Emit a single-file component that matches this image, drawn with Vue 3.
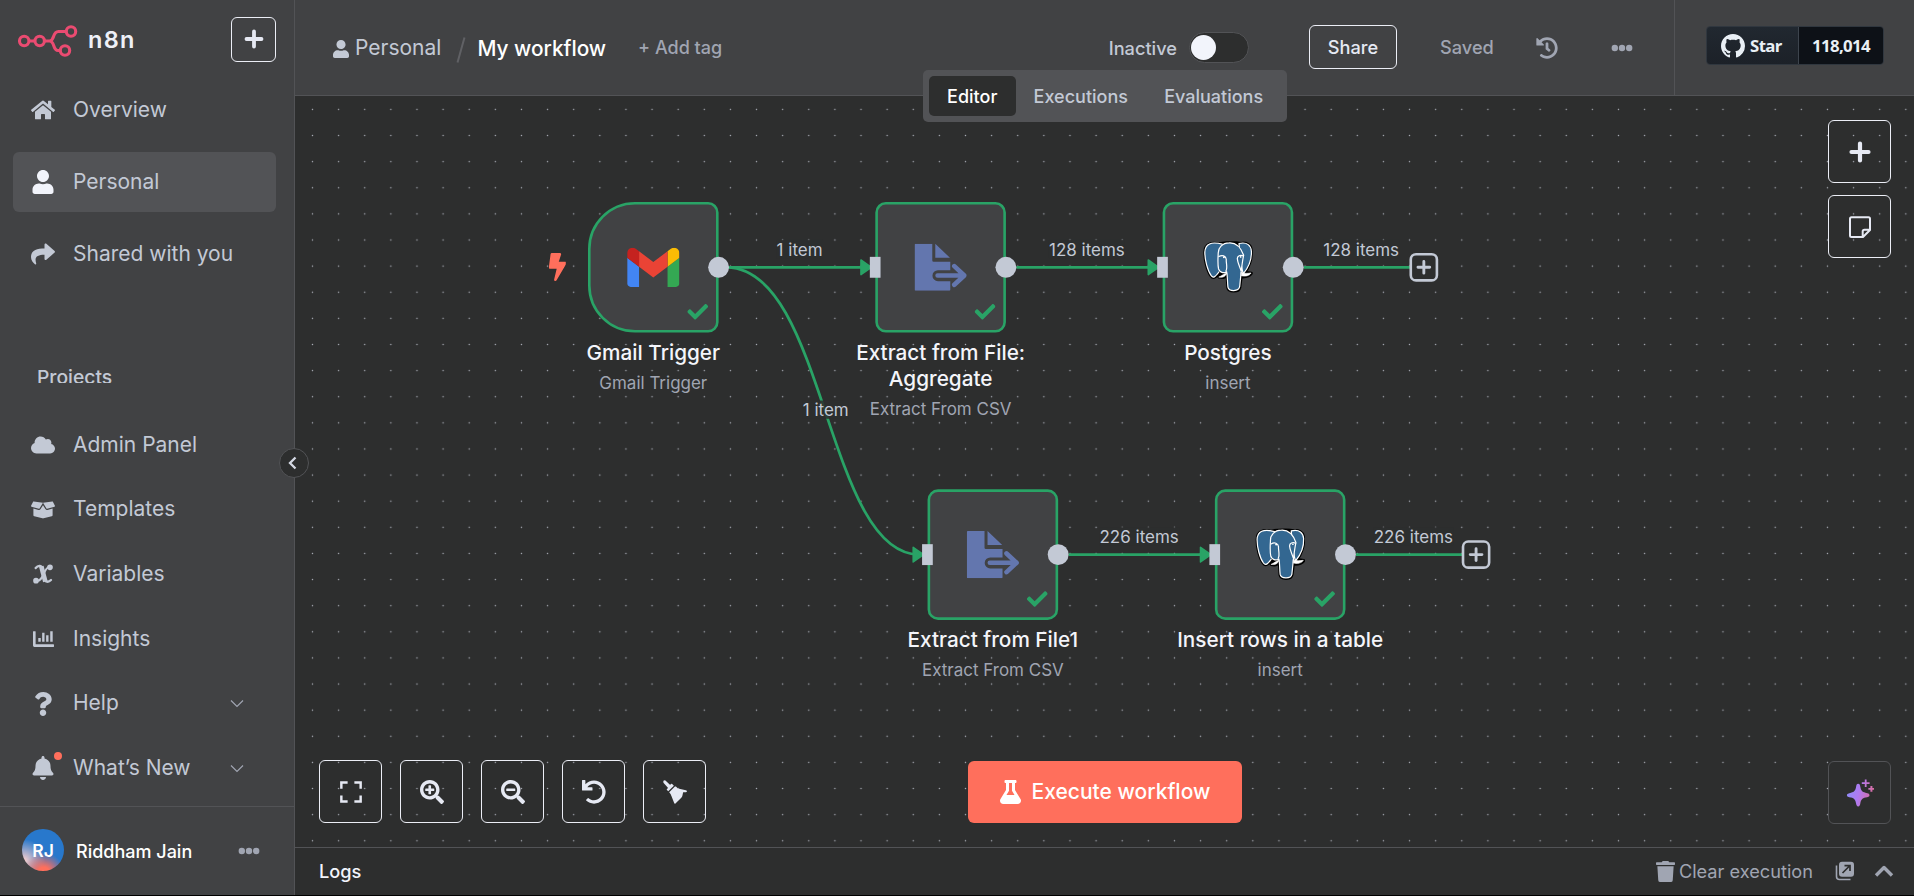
<script setup>
const icons = {
  home: { w: 576, d: 'M280.37 148.26L96 300.11V464a16 16 0 0 0 16 16l112.06-.29a16 16 0 0 0 15.92-16V368a16 16 0 0 1 16-16h64a16 16 0 0 1 16 16v95.64a16 16 0 0 0 16 16.05L464 480a16 16 0 0 0 16-16V300L295.67 148.26a12.19 12.19 0 0 0-15.3 0zM571.6 251.47L488 182.56V44.05a12 12 0 0 0-12-12h-56a12 12 0 0 0-12 12v72.61L318.47 43a48 48 0 0 0-61 0L4.34 251.47a12 12 0 0 0-1.6 16.9l25.5 31A12 12 0 0 0 45.15 301l235.22-193.74a12.19 12.19 0 0 1 15.3 0L530.9 301a12 12 0 0 0 16.9-1.6l25.5-31a12 12 0 0 0-1.7-16.93z' },
  user: { w: 448, d: 'M224 256c70.700 0 128-57.300 128-128S294.700 0 224 0 96 57.300 96 128s57.300 128 128 128zm89.600 32h-16.700c-22.200 10.200-46.900 16-72.900 16s-50.600-5.800-72.900-16h-16.700C60.200 288 0 348.200 0 422.400V464c0 26.500 21.500 48 48 48h352c26.500 0 48-21.500 48-48v-41.600c0-74.200-60.200-134.400-134.400-134.400z' },
  share: { w: 512, d: 'M503.691 189.836L327.687 37.851C312.281 24.546 288 35.347 288 56.015v80.053C127.371 137.907 0 170.1 0 322.326c0 61.441 39.581 122.309 83.333 154.132 13.653 9.931 33.111-2.533 28.077-18.631C66.066 312.814 132.917 274.316 288 272.085V360c0 20.7 24.3 31.453 39.687 18.164l176.004-152c11.071-9.562 11.086-26.753 0-36.328z' },
  cloud: { w: 640, d: 'M537.6 226.6c4.1-10.7 6.4-22.4 6.4-34.6 0-53-43-96-96-96-19.7 0-38.1 6-53.3 16.2C367 64.2 315.3 32 256 32c-88.4 0-160 71.6-160 160 0 2.7.1 5.4.2 8.1C40.2 219.8 0 273.2 0 336c0 79.5 64.5 144 144 144h368c70.7 0 128-57.3 128-128 0-61.9-44-113.6-102.4-125.4z' },
  box: { w: 640, d: 'M425.7 256c-16.9 0-32.8-9-41.4-23.4L320 126l-64.2 106.6c-8.7 14.5-24.6 23.5-41.5 23.5-4.5 0-9-.6-13.3-1.900L64 215v178c0 14.700 10 27.500 24.200 31l216.200 54.100c10.200 2.500 20.900 2.500 31 0L551.800 424c14.200-3.600 24.200-16.400 24.200-31V215l-137 39.100c-4.300 1.300-8.800 1.900-13.300 1.900zm212.600-112.200L586.800 41c-3.100-6.200-9.800-9.800-16.700-8.900L320 64l91.700 152.100c3.800 6.300 11.400 9.300 18.500 7.300l197.900-56.500c9.900-2.900 14.700-13.900 10.200-23.100zM53.200 41L1.700 143.800c-4.600 9.200.3 20.200 10.100 23l197.900 56.500c7.100 2 14.700-1 18.500-7.300L320 64 69.800 32.100c-6.900-.8-13.500 2.700-16.600 8.900z' },
  question: { w: 384, d: 'M202.021 0C122.202 0 70.503 32.703 29.914 91.026c-7.363 10.58-5.093 25.086 5.178 32.874l43.138 32.709c10.373 7.865 25.132 6.026 33.253-4.148 25.049-31.381 43.63-49.449 82.757-49.449 30.764 0 68.816 19.799 68.816 49.631 0 22.552-18.617 34.134-48.993 51.164-35.423 19.86-82.299 44.576-82.299 106.405V320c0 13.255 10.745 24 24 24h72.471c13.255 0 24-10.745 24-24v-5.773c0-42.86 125.268-44.645 125.268-160.627C377.504 66.256 286.902 0 202.021 0zM192 373.459c-38.196 0-69.271 31.075-69.271 69.271 0 38.195 31.075 69.27 69.271 69.27s69.271-31.075 69.271-69.271-31.075-69.27-69.271-69.27z' },
  bell: { w: 448, d: 'M224 512c35.32 0 63.97-28.65 63.97-64H160.03c0 35.35 28.65 64 63.97 64zm215.39-149.71c-19.32-20.76-55.47-51.99-55.47-154.29 0-77.7-54.48-139.9-127.94-155.16V32c0-17.67-14.32-32-31.98-32s-31.98 14.33-31.98 32v20.84C118.56 68.1 64.08 130.3 64.08 208c0 102.3-36.15 133.53-55.47 154.29-6 6.45-8.66 14.16-8.61 21.71.11 16.4 12.98 32 32.1 32h383.8c19.12 0 32-15.6 32.1-32 .05-7.55-2.61-15.27-8.61-21.71z' },
  chart: { w: 512, d: 'M0 76a12 12 0 0 1 12-12h40a12 12 0 0 1 12 12V384H500a12 12 0 0 1 12 12v40a12 12 0 0 1-12 12H32a32 32 0 0 1-32-32zM129 230h60v90h-60zM223 102h58v218h-58zM320 166h58v154h-58zM420 70h60v250h-60z' },
  bolt: { w: 320, d: 'M296 160H180.6l42.6-129.8C227.2 15 215.7 0 200 0H56C44 0 33.8 8.9 32.2 20.8l-32 240C-1.7 275.2 9.5 288 24 288h118.7L96.6 482.5c-3.6 15.2 8 29.5 23.3 29.5 8.400 0 16.400-4.400 20.800-12l176-304c9.300-15.900-2.200-36-20.700-36z' },
  check: { w: 512, d: 'M173.898 439.404l-166.4-166.4c-9.997-9.997-9.997-26.206 0-36.204l36.203-36.204c9.997-9.998 26.207-9.998 36.204 0L192 312.69 432.095 72.596c9.997-9.997 26.207-9.997 36.204 0l36.203 36.204c9.997 9.997 9.997 26.206 0 36.204l-294.4 294.401c-9.998 9.997-26.207 9.997-36.204-.001z' },
  history: { w: 512, d: 'M504 255.531c.253 136.64-111.18 248.372-247.82 248.468-59.015.042-113.223-20.53-155.822-54.911-11.077-8.94-11.905-25.541-1.839-35.607l11.267-11.267c8.609-8.609 22.353-9.551 31.891-1.984C173.062 425.135 212.781 440 256 440c101.705 0 184-82.311 184-184 0-101.705-82.311-184-184-184-48.814 0-93.149 18.969-126.068 49.932l50.754 50.754c10.08 10.08 2.941 27.314-11.313 27.314H24c-8.837 0-16-7.163-16-16V38.627c0-14.254 17.234-21.393 27.314-11.314l49.372 49.372C129.209 34.136 189.552 8 256 8c136.81 0 247.747 110.78 248 247.531zm-180.912 78.784l9.823-12.63c8.138-10.463 6.253-25.542-4.21-33.679L288 256.349V152c0-13.255-10.745-24-24-24h-16c-13.255 0-24 10.745-24 24v135.651l65.409 50.874c10.463 8.137 25.541 6.253 33.679-4.21z' },
  undo: { w: 512, d: 'M212.333 224.333H12c-6.627 0-12-5.373-12-12V12C0 5.373 5.373 0 12 0h48c6.627 0 12 5.373 12 12v78.112C117.773 39.279 184.26 7.47 258.175 8.007c136.906.994 246.448 111.623 246.157 248.532C504.041 393.258 393.12 504 256.333 504c-64.089 0-122.496-24.313-166.51-64.215-5.099-4.622-5.334-12.554-.467-17.42l33.967-33.967c4.474-4.474 11.662-4.717 16.401-.525C170.76 415.336 211.58 432 256.333 432c97.268 0 176-78.716 176-176 0-97.267-78.716-176-176-176-58.496 0-110.28 28.476-142.274 72.333h98.274c6.627 0 12 5.373 12 12v48c0 6.627-5.373 12-12 12z' },
  zoomIn: { w: 512, d: 'M304 192v32c0 6.6-5.4 12-12 12h-56v56c0 6.6-5.4 12-12 12h-32c-6.6 0-12-5.4-12-12v-56h-56c-6.6 0-12-5.4-12-12v-32c0-6.6 5.4-12 12-12h56v-56c0-6.6 5.4-12 12-12h32c6.6 0 12 5.4 12 12v56h56c6.6 0 12 5.4 12 12zm201 284.7L476.7 505c-9.4 9.4-24.6 9.4-33.9 0L343 405.3c-4.5-4.5-7-10.6-7-17V372c-35.3 27.6-79.7 44-128 44C93.1 416 0 322.9 0 208S93.1 0 208 0s208 93.1 208 208c0 48.3-16.4 92.7-44 128h16.3c6.4 0 12.5 2.5 17 7l99.7 99.7c9.3 9.4 9.3 24.6 0 34zM344 208c0-75.2-60.8-136-136-136S72 132.8 72 208s60.8 136 136 136 136-60.8 136-136z' },
  zoomOut: { w: 512, d: 'M304 192v32c0 6.6-5.4 12-12 12H124c-6.6 0-12-5.4-12-12v-32c0-6.6 5.4-12 12-12h168c6.6 0 12 5.4 12 12zm201 284.7L476.7 505c-9.4 9.4-24.6 9.4-33.9 0L343 405.3c-4.5-4.5-7-10.6-7-17V372c-35.3 27.6-79.7 44-128 44C93.1 416 0 322.9 0 208S93.1 0 208 0s208 93.1 208 208c0 48.3-16.4 92.7-44 128h16.3c6.4 0 12.5 2.5 17 7l99.7 99.7c9.3 9.4 9.3 24.6 0 34zM344 208c0-75.2-60.8-136-136-136S72 132.8 72 208s60.8 136 136 136 136-60.8 136-136z' },
  fit: { w: 512, d: 'M24 28H184V80H76V184H24zM328 28H488V184H436V80H328zM24 328H76V432H184V484H24zM436 328H488V484H328V432H436z' },
  broom: { w: 512, d: 'M8 32Q4 14 22 8Q38 0 52 12L142 98Q150 104 160 98L178 82Q188 76 196 84L232 120L112 240L84 212Q76 204 84 194L102 176Q108 168 100 160L14 66Q4 50 8 32zM132 262L254 140Q266 132 276 140L318 180L490 216Q518 226 510 246Q502 262 480 260L430 262L412 340Q404 362 390 378L266 500Q252 514 240 498L180 340Q176 310 132 262z' },
  flask: { w: 448, d: 'M437.2 403.5L320 215V64h8c13.3 0 24-10.7 24-24V24c0-13.3-10.7-24-24-24H120c-13.3 0-24 10.7-24 24v16c0 13.3 10.7 24 24 24h8v151L10.8 403.5C-18.5 450.6 15.3 512 70.9 512h306.2c55.7 0 89.4-61.5 60.1-108.5zM137.9 320l48.2-77.6c3.7-5.2 5.8-11.6 5.8-18.4V64h64v160c0 6.9 2.2 13.2 5.8 18.4l48.2 77.6h-172z' },
  trash: { w: 448, d: 'M432 32H312l-9.4-18.7A24 24 0 0 0 281.1 0H166.8a23.72 23.72 0 0 0-21.4 13.3L136 32H16A16 16 0 0 0 0 48v32a16 16 0 0 0 16 16h416a16 16 0 0 0 16-16V48a16 16 0 0 0-16-16zM53.2 467a48 48 0 0 0 47.9 45h245.8a48 48 0 0 0 47.9-45L416 128H32z' },
  github: { w: 16, h: 16, d: 'M8 0C3.58 0 0 3.58 0 8c0 3.54 2.29 6.53 5.47 7.59.4.07.55-.17.55-.38 0-.19-.01-.82-.01-1.49-2.01.37-2.53-.49-2.69-.94-.09-.23-.48-.94-.82-1.13-.28-.15-.68-.52-.01-.53.63-.01 1.08.58 1.23.82.72 1.21 1.87.87 2.33.66.07-.52.28-.87.51-1.07-1.78-.2-3.64-.89-3.64-3.95 0-.87.31-1.59.82-2.15-.08-.2-.36-1.02.08-2.12 0 0 .67-.21 2.2.82.64-.18 1.32-.27 2-.27s1.36.09 2 .27c1.53-1.04 2.2-.82 2.2-.82.44 1.1.16 1.92.08 2.12.51.56.82 1.27.82 2.15 0 3.07-1.87 3.75-3.65 3.95.29.25.54.73.54 1.48 0 1.07-.01 1.93-.01 2.2 0 .21.15.46.55.38A8.01 8.01 0 0 0 16 8c0-4.42-3.58-8-8-8z' },
}
const box = (n) => `0 0 ${icons[n].w} ${icons[n].h || 512}`

const topNav = [
  { icon: 'home', label: 'Overview' },
  { icon: 'user', label: 'Personal', active: true },
  { icon: 'share', label: 'Shared with you' },
]
const bottomNav = [
  { icon: 'cloud', label: 'Admin Panel' },
  { icon: 'box', label: 'Templates' },
  { icon: 'variable', label: 'Variables' },
  { icon: 'chart', label: 'Insights' },
  { icon: 'question', label: 'Help', chevron: true },
  { icon: 'bell', label: 'What’s New', chevron: true, dot: true },
]
const controls = ['fit', 'zoomIn', 'zoomOut', 'undo', 'broom']

// Workflow coordinates, in canvas units before zoom
const nodes = [
  { x: 0, y: 0, kind: 'gmail', title: ['Gmail Trigger'], sub: 'Gmail Trigger', trigger: true },
  { x: 220, y: 0, kind: 'extract', title: ['Extract from File:', 'Aggregate'], sub: 'Extract From CSV' },
  { x: 440, y: 0, kind: 'postgres', title: ['Postgres'], sub: 'insert', plus: true },
  { x: 260, y: 220, kind: 'extract', title: ['Extract from File1'], sub: 'Extract From CSV' },
  { x: 480, y: 220, kind: 'postgres', title: ['Insert rows in a table'], sub: 'insert', plus: true },
]
const edges = [
  'M108 50H212', 'M106 50C182 50 182 270 254 270', 'M328 50H432', 'M548 50H630',
  'M368 270H472', 'M588 270H670',
]
const arrows = [[220, 50], [440, 50], [260, 270], [480, 270]]
const labels = [
  { x: 162, y: 36.4, t: '1 item' },
  { x: 182, y: 159.4, t: '1 item' },
  { x: 382, y: 36.4, t: '128 items' },
  { x: 592, y: 36.4, t: '128 items' },
  { x: 422, y: 256.4, t: '226 items' },
  { x: 632, y: 256.4, t: '226 items' },
]
const at = (o) => ({ left: o.x + 'px', top: o.y + 'px' })
</script>

<template>
  <div class="app">
    <aside class="sidebar">
      <div class="brand">
        <svg class="logo" width="60" height="32" viewBox="0 0 60 32" fill="none" stroke="#ea4b71" stroke-width="3.100">
          <circle cx="6.200" cy="16" r="4.700" /><circle cx="21.700" cy="16" r="4.700" />
          <circle cx="53" cy="6.500" r="4.700" /><circle cx="47" cy="25.500" r="4.700" />
          <path d="M11 16h6M26.500 16h5C37 16 34 6.500 40.500 6.500H48M31.500 16C37 16 34.500 25.500 40 25.500H42.300" />
        </svg>
        <span class="wordmark">n8n</span>
        <button class="outline add">
          <svg width="20" height="20" viewBox="0 0 20 20"><path d="M10 2.500v15M2.500 10h15" stroke="currentColor" stroke-width="3.800" stroke-linecap="round" /></svg>
        </button>
      </div>
      <nav class="top-nav">
        <a v-for="n in topNav" :key="n.label" class="item tall" :class="{ active: n.active }">
          <span class="ico"><svg class="glyph" :viewBox="box(n.icon)"><path :d="icons[n.icon].d" /></svg></span>
          <span class="text">{{ n.label }}</span>
        </a>
      </nav>
      <div class="projects">Projects</div>
      <nav class="bottom-nav">
        <a v-for="n in bottomNav" :key="n.label" class="item">
          <span class="ico">
            <svg v-if="n.icon === 'variable'" class="var" width="20" height="20" viewBox="0 0 60 60" fill="none" stroke="currentColor" stroke-linecap="round">
              <path d="M8 12C16 2 27 4 29 15L35 44C37 55 46 56 54 48" stroke-width="7" />
              <path d="M25 7L37 53" stroke-width="14" stroke-linecap="butt" />
              <path d="M50 9C42 8 37 18 32 30C27 42 20 52 11 50" stroke-width="6" />
              <circle cx="51" cy="10" r="4.500" stroke-width="8" /><circle cx="9" cy="50" r="4.500" stroke-width="8" />
            </svg>
            <svg v-else class="glyph" :class="n.icon" :viewBox="box(n.icon)"><path :d="icons[n.icon].d" /></svg>
            <i v-if="n.dot" class="dot"></i>
          </span>
          <span class="text">{{ n.label }}</span>
          <svg v-if="n.chevron" class="chev" width="14" height="9" viewBox="0 0 14 9"><path d="M1 1.500l6 6 6-6" fill="none" stroke="currentColor" stroke-width="1.200" /></svg>
        </a>
      </nav>
      <div class="account">
        <span class="avatar">RJ</span>
        <span class="name">Riddham Jain</span>
        <svg class="dots" width="22" height="8" viewBox="0 0 22 8"><circle cx="3.800" cy="4" r="3.200" /><circle cx="11" cy="4" r="3.200" /><circle cx="18.200" cy="4" r="3.200" /></svg>
      </div>
      <button class="collapse">
        <svg width="10" height="14" viewBox="0 0 10 14"><path d="M7.500 1.500L2 7l5.500 5.500" fill="none" stroke="#d5d9e4" stroke-width="2.300" /></svg>
      </button>
    </aside>

    <section class="main">
      <header class="header">
        <div class="workflow-bar">
          <svg class="crumb-icon" width="16" height="18" :viewBox="box('user')" preserveAspectRatio="none"><path :d="icons.user.d" /></svg>
          <span class="crumb">Personal</span>
          <svg class="slash" width="10" height="26" viewBox="0 0 10 26"><path d="M8.500 0.500L1.500 25.500" stroke="#606165" stroke-width="2" /></svg>
          <span class="wf-name">My workflow</span>
          <span class="tag">+ Add tag</span>
          <span class="inactive">Inactive</span>
          <span class="switch"><i></i></span>
          <button class="outline share">Share</button>
          <span class="saved">Saved</span>
          <svg class="history" width="22" height="22" :viewBox="box('history')"><path :d="icons.history.d" /></svg>
          <svg class="dots more" width="22" height="8" viewBox="0 0 22 8"><circle cx="3.800" cy="4" r="3.200" /><circle cx="11" cy="4" r="3.200" /><circle cx="18.200" cy="4" r="3.200" /></svg>
        </div>
        <div class="github">
          <div class="gh">
            <span class="star"><svg width="24" height="24" :viewBox="box('github')"><path :d="icons.github.d" /></svg>Star</span>
            <span class="count">118,014</span>
          </div>
        </div>
      </header>
      <div class="tabs">
        <span class="tab on">Editor</span><span class="tab">Executions</span><span class="tab">Evaluations</span>
      </div>

      <div class="canvas">
        <svg class="grid" width="100%" height="100%">
          <pattern id="dots" x="4.440" y="0.340" width="26.120" height="26.120" patternUnits="userSpaceOnUse">
            <circle cx="13.060" cy="13.060" r="0.750" fill="#a9adb6" />
          </pattern>
          <rect width="100%" height="100%" fill="url(#dots)" />
        </svg>

        <div class="world">
          <svg class="edges" width="720" height="340">
            <path v-for="e in edges" :key="e" :d="e" />
          </svg>
          <svg class="bolt" width="13.500" height="21.500" :viewBox="box('bolt')" preserveAspectRatio="none"><path :d="icons.bolt.d" /></svg>
          <div v-for="n in nodes" :key="n.title[0]" class="node" :style="at(n)">
            <div class="tile" :class="{ trigger: n.trigger }">
              <svg v-if="n.kind === 'gmail'" width="40" height="30" viewBox="52 42 88 66">
                <path fill="#4285f4" d="M58 108h14V74L52 59v43c0 3.320 2.690 6 6 6" />
                <path fill="#34a853" d="M120 108h14c3.320 0 6-2.690 6-6V59l-20 15" />
                <path fill="#fbbc04" d="M120 48v26l20-15v-8c0-7.420-8.470-11.650-14.400-7.200" />
                <path fill="#ea4335" d="M72 74V48l24 18 24-18v26L96 92" />
                <path fill="#c5221f" d="M52 51v8l20 15V48l-5.600-4.200c-5.940-4.450-14.400-.22-14.400 7.200" />
              </svg>
              <svg v-else-if="n.kind === 'extract'" width="40" height="36" viewBox="0 0 156 141" fill="#6376ae">
                <path d="M3 0H53V50Q53 54 57 54H107V79H70A16 16 0 0 0 70 112H107V138Q107 141 104 141H3Q0 141 0 138V3Q0 0 3 0zM62 0L106 42H62z" />
                <path d="M69 95H146M119 67L149 95L119 123" fill="none" stroke="#6376ae" stroke-width="14" stroke-linecap="round" stroke-linejoin="round" />
              </svg>
              <svg v-else width="38.500" height="40" viewBox="488 184 150 156" stroke-linejoin="round" stroke-linecap="round">
                <g fill="#000" stroke="#000" stroke-width="10">
                  <path d="M535 193C512 186 494 194 493 217C493 240 501 272 512 287C518 295 523 292 531 283L536 291C546 294 555 290 560 284L562 322C564 335 594 337 597 322L601 290C612 291 626 288 632 280L612 277C624 262 633 235 632 214C631 193 615 188 600 191C580 185 550 188 535 193z" />
                </g>
                <g fill="#336791" stroke="#fff" stroke-width="3.600">
                  <path d="M545 193C512 184 494 192 493 217C493 240 501 272 512 287C518 295 523 292 535 276" />
                  <path d="M595 191C620 185 631 198 632 214C633 235 624 262 608 281C600 260 598 220 595 191z" />
                  <path d="M533 221C532 204 545 189 566 189C588 188 602 206 609 226C605 245 603 262 601 281L597 320C594 335 565 335 562 321C560 304 561 287 558 275C549 281 538 277 534 267C531 252 532 236 533 221z" />
                  <path d="M535 230C545 224 556 228 557 238C556 250 562 263 556 273M608 228C599 224 590 228 590 236C591 250 598 260 601 272" fill="none" />
                  <path d="M536 291C546 294 555 289 559 279C551 280 548 285 536 291zM602 277C610 282 622 280 631 279C626 288 612 290 602 287z" fill="#fff" stroke-width="2" />
                </g>
                <circle cx="550" cy="232" r="3" fill="#fff" /><circle cx="600" cy="231" r="2.500" fill="#fff" />
              </svg>
              <svg class="ok" width="16" height="16" :viewBox="box('check')"><path :d="icons.check.d" /></svg>
            </div>
            <i class="out"></i>
            <i v-if="n.plus" class="plus"><svg width="22" height="22" viewBox="0 0 22 22"><path d="M11 6.500v9M6.500 11h9" stroke="#c3c9d5" stroke-width="2.200" stroke-linecap="round" /></svg></i>
            <div class="caption">
              <div v-for="t in n.title" :key="t" class="title">{{ t }}</div>
              <div class="sub">{{ n.sub }}</div>
            </div>
          </div>
          <svg class="edges over" width="720" height="340">
            <g v-for="a in arrows" :key="a.join()">
              <path class="head" :d="`M${a[0] - 11} ${a[1] - 5.6}L${a[0] - 3} ${a[1]}L${a[0] - 11} ${a[1] + 5.6}z`" />
              <rect :x="a[0] - 4.200" :y="a[1] - 8" width="8.200" height="16" fill="#c3c9d5" />
            </g>
          </svg>
          <span v-for="l in labels" :key="l.x" class="label" :style="at(l)">{{ l.t }}</span>
        </div>

        <div class="side-tools">
          <button class="outline tool"><svg width="22" height="22" viewBox="0 0 22 22"><path d="M11 2.500v17M2.500 11h17" stroke="currentColor" stroke-width="4.200" stroke-linecap="round" /></svg></button>
          <button class="outline tool">
            <svg width="22" height="22" viewBox="0 0 22 22" fill="none" stroke="currentColor" stroke-width="2" stroke-linejoin="round"><path d="M2.500 1.200H19.500Q21 1.200 21 2.700V14L14 21H2.500Q1 21 1 19.500V2.700Q1 1.200 2.500 1.200zM20.500 13.700H15.500Q13.700 13.700 13.700 15.500V20.500" /></svg>
          </button>
        </div>

        <div class="bottom-tools">
          <button v-for="c in controls" :key="c" class="outline tool">
            <svg width="24" height="24" :viewBox="box(c)"><path :d="icons[c].d" fill="currentColor" /></svg>
          </button>
        </div>
        <button class="execute">
          <svg width="21" height="24" :viewBox="box('flask')"><path :d="icons.flask.d" /></svg>Execute workflow
        </button>
        <button class="assistant">
          <svg width="28" height="28" viewBox="0 0 28 28">
            <defs><linearGradient id="ai" gradientUnits="userSpaceOnUse" x1="1" y1="12" x2="27" y2="18"><stop offset="0" stop-color="#8f8cf8" /><stop offset=".45" stop-color="#b07af0" /><stop offset="1" stop-color="#dc6c9c" /></linearGradient></defs>
            <g fill="url(#ai)"><path d="M12.200 4.800C13.600 4.800 14 6 14.300 7.800C15 11.500 16 13 19.500 13.700C22 14.200 23.500 14.600 23.500 16.200S22 18.100 19.500 18.600C16 19.300 15 21 14.300 24.500C14 26.200 13.600 27.400 12.200 27.400S10.400 26.200 10.100 24.500C9.400 21 8.400 19.300 5 18.600C2.500 18.100 .9 17.700 .9 16.200S2.500 14.200 5 13.700C8.400 13 9.400 11.500 10.100 7.800C10.400 6 10.800 4.800 12.200 4.800z" />
            <path d="M18.800 .5h1.800v2.800h3v1.800h-3v3h-1.800v-3h-3V3.300h3zM24.400 7h2v1.900h1.600v1.900h-1.600v2h-2v-2h-2V8.900h2z" /></g>
          </svg>
        </button>
      </div>

      <footer class="logs">
        <b>Logs</b>
        <span class="clear"><svg width="19" height="21" :viewBox="box('trash')" preserveAspectRatio="none"><path :d="icons.trash.d" /></svg>Clear execution</span>
        <svg class="popout" width="20" height="20" viewBox="0 0 20 20"><rect x="4" y=".8" width="15" height="15" rx="3" fill="#a0a5b2" /><path d="M1.500 4.500V15.500Q1.500 18.500 4.500 18.500H15.500" fill="none" stroke="#a0a5b2" stroke-width="1.600" /><path d="M7.500 12L14.500 5M9.500 4.600H15V10" fill="none" stroke="#2d2e2e" stroke-width="1.700" /></svg>
        <svg class="up" width="20" height="14" viewBox="0 0 20 14"><path d="M2 11.500L10 3.500L18 11.500" fill="none" stroke="#a0a5b2" stroke-width="3.400" stroke-linejoin="round" /></svg>
      </footer>
    </section>
  </div>
</template>

<style>
body { background: #000; }
</style>

<style scoped>
* { box-sizing: border-box; }
.app { display: flex; width: 1914px; height: 896px; border-bottom: 1px solid #000; background: #2d2e2e; font-family: Inter, "Liberation Sans", sans-serif; color: #c3c9d5; overflow: hidden; }
button { font: inherit; padding: 0; background: none; border: none; color: inherit; display: flex; align-items: center; justify-content: center; }
svg { display: block; flex: none; }
.outline { border: 1px solid #eceef6; border-radius: 6px; color: #e6e9f3; }

.sidebar { position: relative; width: 295px; flex: none; background: #414244; border-right: 1px solid #525356; display: flex; flex-direction: column; }
.brand { height: 80px; display: flex; align-items: center; padding: 0 18px 2px 18px; }
.logo { margin-top: 4px; }
.wordmark { color: #eef0f7; font-size: 23.500px; font-weight: 600; letter-spacing: 1.300px; margin-left: 10px; padding-top: 1px; }
.add { width: 45px; height: 45px; margin-left: auto; }
.top-nav { display: flex; flex-direction: column; gap: 12px; padding-left: 13px; }
.item { display: flex; align-items: center; height: 64.600px; font-size: 21px; }
.item.tall { height: 60px; width: 263px; border-radius: 6px; }
.text { padding-bottom: 2px; }
.active { background: #525356; }
.active .ico { color: #f2f4fb; }
.ico { position: relative; width: 24px; height: 24px; margin: 0 18px; display: flex; align-items: center; justify-content: center; }
.glyph { width: 24px; height: 24px; fill: currentColor; }
.glyph.chart { width: 21px; }
.projects { margin: 76px 0 0 37px; height: 23px; line-height: 35px; font-size: 19.300px; font-weight: 500; overflow: hidden; }
.bottom-nav { margin-top: 30px; padding-left: 13px; display: flex; flex-direction: column; }
.dot { position: absolute; right: -7px; top: -4px; width: 8px; height: 8px; border-radius: 50%; background: #ff6f5c; }
.chev { margin-left: auto; margin-right: 50px; color: #a0a5b2; }
.account { margin-top: auto; height: 89px; border-top: 1px solid #525356; display: flex; align-items: center; padding: 0 34px 2px 22px; }
.avatar { width: 42px; height: 42px; border-radius: 50%; background: radial-gradient(circle at 52% 105%, #ff6f5c 12%, rgba(255, 111, 92, 0) 42%), radial-gradient(circle at 5% 75%, #fbd0cc 0, rgba(251, 208, 204, 0) 42%), #2878cc; color: #fff; font-size: 17.500px; font-weight: 600; display: flex; align-items: center; justify-content: center; }
.name { margin-left: 12px; color: #fff; font-size: 18px; font-weight: 500; padding-top: 3px; }
.dots { margin-left: auto; fill: #a0a5b2; }
.account .dots { margin-top: 2px; }
.collapse { position: absolute; z-index: 5; left: 279px; top: 448px; width: 30px; height: 30px; border-radius: 50%; background: #2d2e2e; border: 1px solid #525356; padding-right: 3px; }

.main { position: relative; flex: 1; display: flex; flex-direction: column; min-width: 0; }
.header { height: 96px; background: #414244; border-bottom: 1px solid #525356; display: flex; }
.workflow-bar { flex: none; width: 1380px; border-right: 1px solid #525356; display: flex; align-items: center; padding: 0 41px 0 38px; font-size: 18.200px; font-weight: 500; }
.crumb-icon { fill: #c3c9d5; margin-top: 3px; }
.crumb { margin-left: 6px; font-size: 21px; font-weight: 400; }
.slash { margin: 4px 11px 0 15px; }
.wf-name { color: #fff; font-size: 20.800px; padding-top: 2px; }
.tag { margin-left: 32px; color: #a0a5b2; font-size: 18px; }
.inactive { margin-left: auto; }
.switch { width: 60px; height: 31px; border-radius: 16px; background: #2d2e2e; border: 1px solid #525356; margin-left: 12px; display: flex; align-items: center; padding-left: 1px; }
.switch i { width: 25px; height: 25px; border-radius: 50%; background: #f2f4fb; }
.share { width: 88px; height: 44px; margin: -2px 43px 0 60px; color: #e6e9f3; }
.saved { color: #a0a5b2; width: 54px; margin-right: 42px; padding-bottom: 2px; }
.history { fill: #a0a5b2; }
.more { margin-left: 53px; }
.github { flex: 1; padding: 26px 0 0 31px; }
.gh { display: flex; width: 178px; height: 39px; border: 1px solid #30373f; border-radius: 4px; overflow: hidden; color: #e9eff5; font-family: "Open Sans", "Noto Sans", sans-serif; font-weight: 700; font-size: 16.800px; letter-spacing: -.6px; }
.star { width: 92px; background: linear-gradient(#212830, #1c2128); border-right: 1px solid #3d444d; display: flex; align-items: center; gap: 5px; padding-left: 14px; }
.star svg { fill: currentColor; }
.count { flex: 1; background: #0d1117; display: flex; align-items: center; justify-content: center; }
.tabs { position: absolute; z-index: 3; left: 628px; top: 70px; width: 364px; height: 52px; border-radius: 5px; background: #525356; display: flex; align-items: center; padding: 0 6px; font-size: 18px; font-weight: 500; }
.tab { height: 40px; padding: 0 18.100px; border-radius: 5px; display: flex; align-items: center; }
.tab.on { background: #2d2e2e; color: #fff; }

.canvas { position: relative; height: 751px; overflow: hidden; }
.grid { position: absolute; left: 0; top: 0; }
.world { position: absolute; left: 292.500px; top: 105.800px; transform: scale(1.306); transform-origin: 0 0; }
.edges { position: absolute; left: 0; top: 0; fill: none; stroke: #29a366; stroke-width: 2.100; overflow: visible; }
.edges.over { stroke: none; }
.edges .head { fill: #29a366; stroke: #29a366; stroke-width: 1.200; stroke-linejoin: round; }
.bolt { position: absolute; left: -30.200px; top: 39px; fill: #ff6f5c; }
.node { position: absolute; width: 100px; }
.tile { position: relative; width: 100px; height: 100px; border: 2px solid #29a366; border-radius: 8px; background: #414244; display: flex; align-items: center; justify-content: center; }
.trigger { border-radius: 36px 8px 8px 36px; }
.ok { position: absolute; right: 6px; bottom: 6px; fill: #29a366; }
.out { position: absolute; left: 92px; top: 42px; width: 16px; height: 16px; border-radius: 50%; background: #c3c9d5; }
.plus { position: absolute; left: 189.200px; top: 39px; width: 22px; height: 22px; border: 2px solid #c3c9d5; border-radius: 5px; background: #2d2e2e; display: flex; align-items: center; justify-content: center; }
.caption { display: flex; flex-direction: column; align-items: center; margin-top: 6.200px; white-space: nowrap; }
.title { font-size: 15.900px; line-height: 20px; font-weight: 500; color: #f4f5fa; }
.sub { font-size: 13px; line-height: 16px; color: #a0a5b2; margin-top: 4px; }
.label { position: absolute; transform: translate(-50%, -50%); font-size: 13px; line-height: 14px; white-space: nowrap; background: rgba(45, 46, 46, .85); }

.tool { width: 63px; height: 63px; }
.side-tools { position: absolute; right: 23px; top: 24px; display: flex; flex-direction: column; gap: 12px; }
.bottom-tools { position: absolute; left: 24px; top: 664px; display: flex; gap: 18px; }
.execute { position: absolute; left: 673px; top: 665px; width: 274px; height: 62px; border-radius: 6px; background: #ff6f5c; color: #fff; font-size: 21px; font-weight: 500; gap: 11px; padding-bottom: 1px; }
.execute svg { fill: #fff; }
.assistant { position: absolute; right: 23px; top: 665px; width: 63px; height: 63px; border: 1px solid #525356; border-radius: 6px; background: #2d2e2e; }
.logs { flex: 1; border-top: 1px solid #525356; display: flex; align-items: center; padding: 0 20px 1px 24px; font-size: 18.200px; }
.logs b { font-weight: 500; color: #f2f4fb; }
.clear { margin-left: auto; display: flex; align-items: center; gap: 4px; color: #a0a5b2; }
.clear svg { fill: #a0a5b2; }
.popout { margin-left: 22px; }
.up { margin-left: 19px; }
</style>
